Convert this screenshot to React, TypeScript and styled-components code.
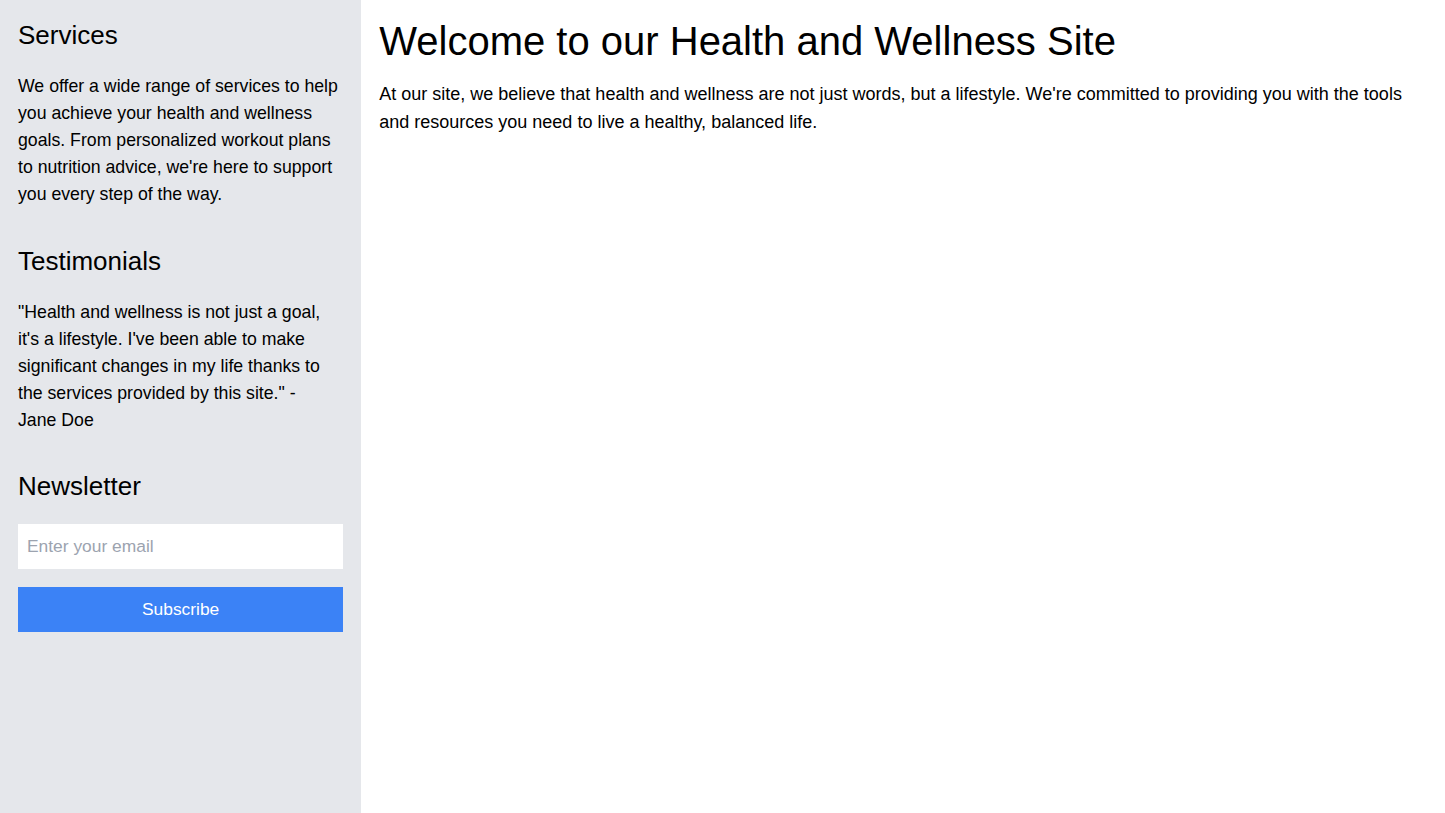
import React from 'react';
import styled, { createGlobalStyle } from 'styled-components';

const GlobalStyle = createGlobalStyle`
  * { box-sizing: border-box; }
  html, body { margin: 0; padding: 0; }
  body {
    font-family: "Liberation Sans", Arial, sans-serif;
    color: #000;
    background: #fff;
  }
`;

const Page = styled.div`
  display: flex;
  min-height: 813px;
`;

const Sidebar = styled.aside`
  width: 25%;
  flex-shrink: 0;
  background: #e5e7eb;
  padding: 18px;
`;

const Main = styled.main`
  flex: 1;
  padding: 18px;
`;

const Section = styled.section`
  margin-bottom: 35.5px;
`;

const Heading = styled.h2`
  font-size: 26px;
  font-weight: 400;
  line-height: 34px;
  margin: 0 0 21px;
`;

const Title = styled.h1`
  font-size: 40px;
  font-weight: 400;
  line-height: 46px;
  margin: 0 0 15.5px;
`;

const Text = styled.p<{ $size?: number; $lead?: number }>`
  font-size: ${(p) => p.$size ?? 17.7}px;
  line-height: ${(p) => p.$lead ?? 27}px;
  margin: 0;
`;

const Form = styled.form`
  display: flex;
  flex-direction: column;
  gap: 18px;
`;

const EmailInput = styled.input`
  height: 45px;
  border: none;
  background: #fff;
  padding: 0 9px;
  font-family: inherit;
  font-size: 17.4px;
  outline: none;
  &::placeholder { color: #9ca3af; }
`;

const SubscribeButton = styled.button`
  height: 45px;
  border: none;
  background: #3b82f6;
  color: #fff;
  font-family: inherit;
  font-size: 17.4px;
  cursor: pointer;
`;

export default function App() {
  return (
    <>
      <GlobalStyle />
      <Page>
        <Sidebar>
          <Section>
            <Heading>Services</Heading>
            <Text>
              We offer a wide range of services to help you achieve your health and wellness goals. From
              personalized workout plans to nutrition advice, we're here to support you every step of the way.
            </Text>
          </Section>
          <Section>
            <Heading>Testimonials</Heading>
            <Text>
              "Health and wellness is not just a goal, it's a lifestyle. I've been able to make significant
              changes in my life thanks to the services provided by this site." - Jane{'\u00a0'}Doe
            </Text>
          </Section>
          <Section>
            <Heading>Newsletter</Heading>
            <Form onSubmit={(e) => e.preventDefault()}>
              <EmailInput type="email" placeholder="Enter your email" />
              <SubscribeButton type="submit">Subscribe</SubscribeButton>
            </Form>
          </Section>
        </Sidebar>
        <Main>
          <Title>Welcome to our Health and Wellness Site</Title>
          <Text $size={18} $lead={28}>
            At our site, we believe that health and wellness are not just words, but a lifestyle. We're committed
            to providing you with the tools and resources you need to live a healthy, balanced life.
          </Text>
        </Main>
      </Page>
    </>
  );
}
